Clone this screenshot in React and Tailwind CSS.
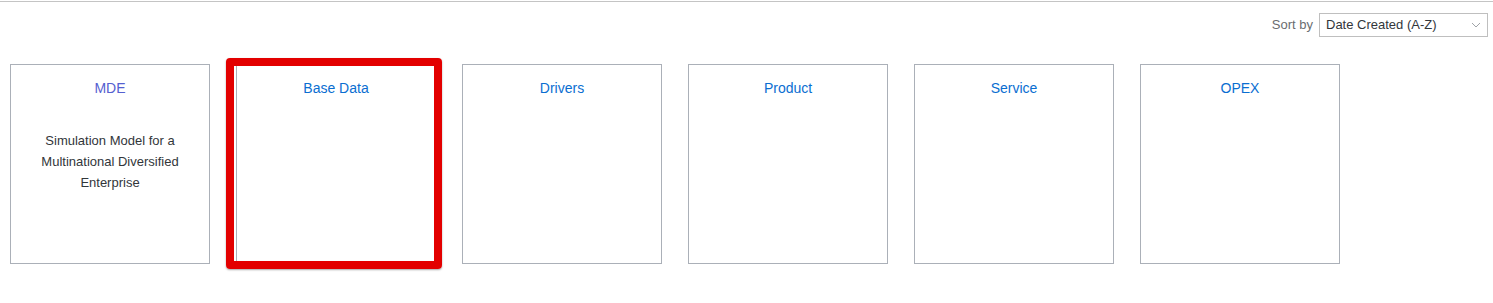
import React from 'react';

const tiles = [
  { title: 'MDE', desc: 'Simulation Model for a Multinational Diversified Enterprise', visited: true },
  { title: 'Base Data', highlight: true },
  { title: 'Drivers' },
  { title: 'Product' },
  { title: 'Service' },
  { title: 'OPEX' },
];

function Tile({ title, desc, visited, highlight }) {
  return (
    <div className="relative w-[200px] h-[200px] shrink-0 bg-white border border-[#abb0b8] flex flex-col items-center">
      <span className={`mt-[15px] text-[14px] leading-[16px] ${visited ? 'text-[#5560d0]' : 'text-[#0a6ed1]'}`}>
        {title}
      </span>
      {desc && (
        <p className="mt-[34px] px-[16px] text-center text-[13px] leading-[21px] text-[#32363a]">{desc}</p>
      )}
      {highlight && (
        <div className="absolute left-[-11px] top-[-7px] w-[216px] h-[211px] rounded-[4px] border-[8px] border-[#e30000] shadow-[0_1px_2px_rgba(0,0,0,0.35)]" />
      )}
    </div>
  );
}

export default function App() {
  return (
    <div className="w-[1493px] h-[303px] bg-white pt-px" style={{ fontFamily: '"Liberation Sans", Arial, sans-serif' }}>
      <div className="h-px bg-[#c4c4c4]" />

      {/* sort bar */}
      <div className="flex justify-end items-center gap-[6px] pr-[5px] mt-[11px]">
        <span className="text-[13px] text-[#6a6d70]">Sort by</span>
        <div className="w-[169px] h-[24px] border border-[#bfbfbf] flex items-center justify-between pl-[6px] pr-[6px]">
          <span className="text-[13px] text-[#32363a]">Date Created (A-Z)</span>
          <svg width="10" height="6" viewBox="0 0 10 6" fill="none">
            <path d="M1 1l4 4 4-4" stroke="#a0a4a8" strokeWidth="1" />
          </svg>
        </div>
      </div>

      {/* tiles */}
      <div className="flex gap-[26px] pl-[10px] mt-[27px]">
        {tiles.map((t) => (
          <Tile key={t.title} {...t} />
        ))}
      </div>
    </div>
  );
}
